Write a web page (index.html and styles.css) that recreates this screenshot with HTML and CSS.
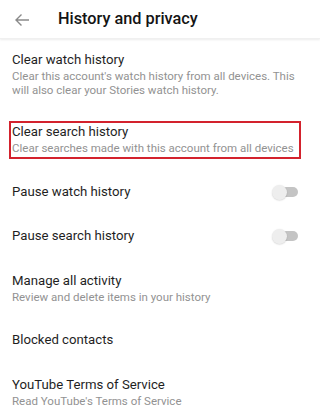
FILE: index.html
```html
<!DOCTYPE html>
<html>
<head>
<meta charset="utf-8">
<link rel="stylesheet" href="styles.css">
</head>
<body>
<header class="appbar">
  <svg class="back" width="16" height="14" viewBox="0 0 16 14">
    <path d="M15 7H2M7.5 1.5L2 7l5.5 5.5" fill="none" stroke="#8a8a8a" stroke-width="1.4"/>
  </svg>
  <h1 class="title">History and privacy</h1>
</header>
<main class="list">
  <div class="row row-tall">
    <div class="item-title">Clear watch history</div>
    <div class="item-sub">Clear this account's watch history from all devices. This will also clear your Stories watch history.</div>
  </div>
  <div class="row row-two">
    <div class="highlight">
      <div class="item-title">Clear search history</div>
      <div class="item-sub">Clear searches made with this account from all devices</div>
    </div>
  </div>
  <div class="row row-one row-toggle">
    <div class="item-title">Pause watch history</div>
    <span class="toggle"><span class="thumb"></span></span>
  </div>
  <div class="row row-one row-toggle">
    <div class="item-title">Pause search history</div>
    <span class="toggle"><span class="thumb"></span></span>
  </div>
  <div class="row row-two">
    <div class="item-title">Manage all activity</div>
    <div class="item-sub">Review and delete items in your history</div>
  </div>
  <div class="row row-one">
    <div class="item-title">Blocked contacts</div>
  </div>
  <div class="row row-two">
    <div class="item-title">YouTube Terms of Service</div>
    <div class="item-sub">Read YouTube's Terms of Service</div>
  </div>
</main>
</body>
</html>
```
FILE: styles.css
```css
html, body {
  margin: 0;
  padding: 0;
  background: #ffffff;
  font-family: Roboto, "Liberation Sans", Arial, sans-serif;
  overflow: hidden;
}
.appbar {
  height: 38px;
  display: flex;
  align-items: center;
  padding-left: 14px;
  box-shadow: 0 1px 2px rgba(0,0,0,0.08);
  border-bottom: 1px solid #f0f0f0;
  position: relative;
  z-index: 1;
}
.back {
  display: block;
  margin-top: 1px;
}
.title {
  margin: 0 0 0 28px;
  font-size: 16.3px;
  font-weight: 500;
  color: #141414;
  line-height: 20px;
}
.list {
  display: flex;
  flex-direction: column;
}
.row {
  display: flex;
  flex-direction: column;
  justify-content: center;
  padding: 0 12px;
}
.row-tall { height: 71px; }
.row-two { height: 60px; }
.row-one { height: 44px; }
.row-toggle {
  flex-direction: row;
  align-items: center;
  justify-content: space-between;
  padding-right: 22px;
}
.item-title {
  font-size: 13.2px;
  line-height: 16px;
  color: #1f1f1f;
}
.item-sub {
  font-size: 11.5px;
  line-height: 14px;
  color: #929292;
  margin-top: 1px;
}
.row-tall .item-sub { padding-right: 10px; }
.row-two .highlight {
  margin-left: -3px;
  margin-right: 7px;
  border: 2px solid #d3222d;
  padding: 1px 0 0 1px;
  height: 33px;
  white-space: nowrap;
  overflow: visible;
}
.toggle {
  position: relative;
  width: 26px;
  height: 15px;
  display: block;
}
.toggle::before {
  content: "";
  position: absolute;
  left: 7px;
  top: 2.5px;
  width: 19px;
  height: 10px;
  border-radius: 5px;
  background: #c4c4c4;
}
.thumb {
  position: absolute;
  left: 0;
  top: 0;
  width: 15px;
  height: 15px;
  border-radius: 50%;
  background: #eeeeee;
  box-shadow: 0 0.5px 1.5px rgba(0,0,0,0.18);
}
```
